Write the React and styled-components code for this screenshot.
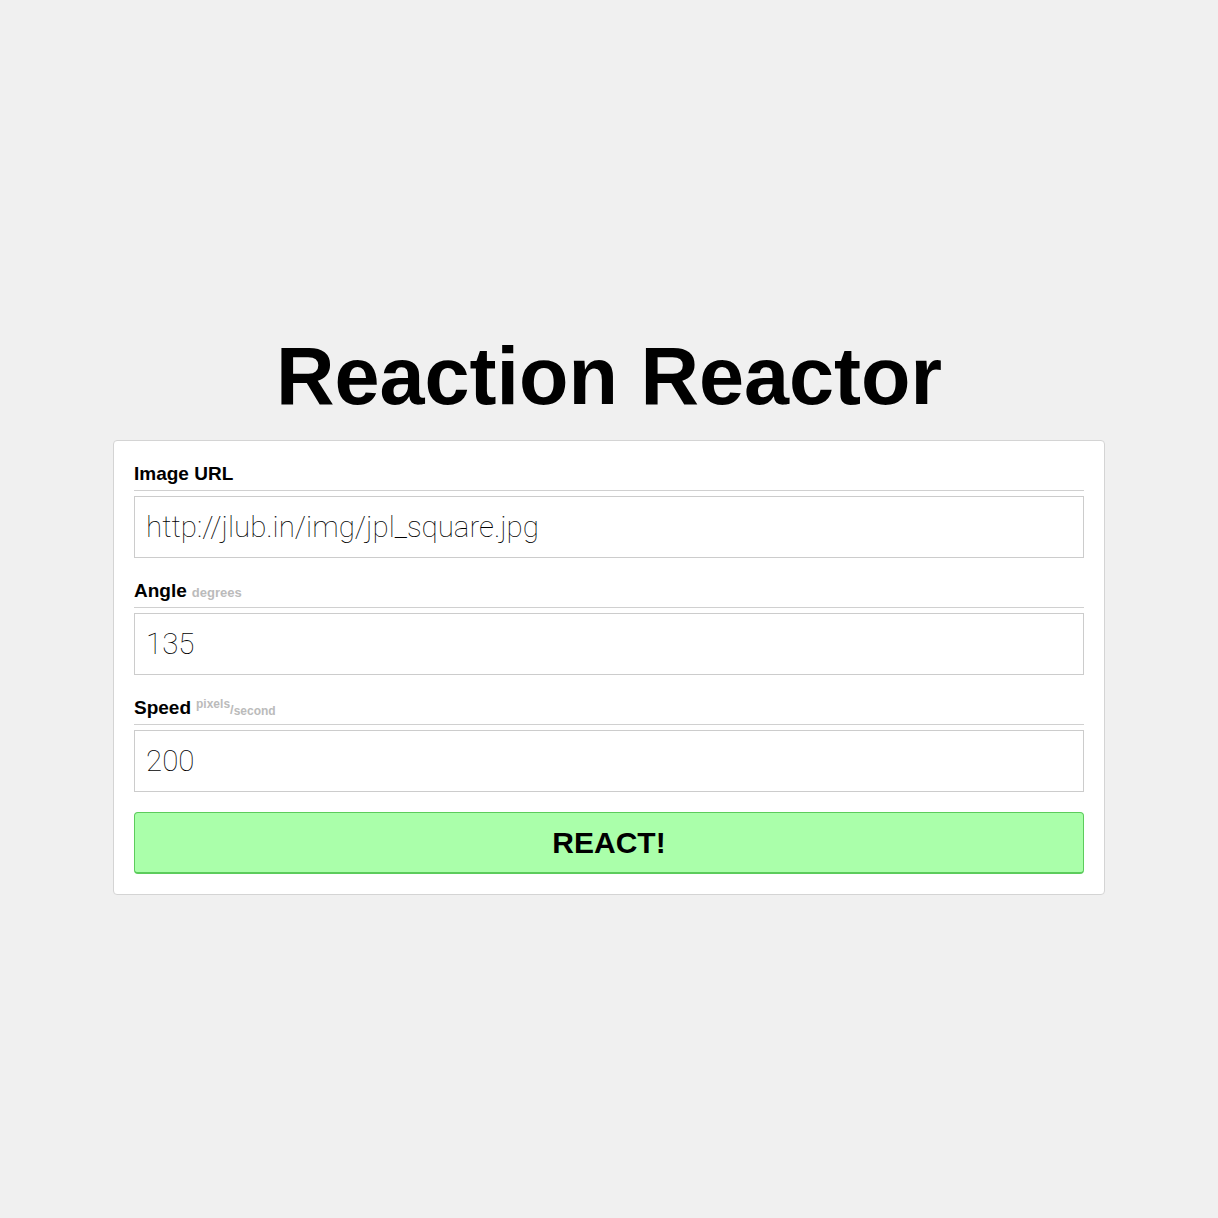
import React from 'react';
import styled, { createGlobalStyle } from 'styled-components';

const GlobalStyle = createGlobalStyle`
  html, body {
    margin: 0;
    padding: 0;
    background: #f0f0f0;
  }
  body {
    font-family: "Liberation Sans", Arial, sans-serif;
    color: #000;
  }
`;

const Page = styled.div`
  display: flex;
  flex-direction: column;
  align-items: center;
  padding-top: 330px;
`;

const Title = styled.h1`
  margin: 0 0 18px;
  font-size: 81px;
  line-height: 92px;
  font-weight: 700;
`;

const Card = styled.form`
  box-sizing: border-box;
  width: 992px;
  padding: 22px 20px 20px;
  background: #fff;
  border: 1px solid #d4d4d4;
  border-radius: 4px;
  display: flex;
  flex-direction: column;
`;

const Field = styled.div`
  display: flex;
  flex-direction: column;
  margin-bottom: 22px;

  &:last-of-type {
    margin-bottom: 20px;
  }
`;

const Label = styled.label`
  display: block;
  font-size: 19px;
  line-height: 22px;
  height: 22px;
  font-weight: 700;
  padding-bottom: 5px;
  border-bottom: 1px solid #d0d0d0;
  margin-bottom: 5px;
`;

const Unit = styled.span`
  margin-left: 5px;
  font-size: 13px;
  line-height: 1;
  font-weight: 700;
  color: #bbb;
`;

const Sup = styled.span`
  font-size: 12px;
  position: relative;
  top: -6px;
`;

const Sub = styled.span`
  font-size: 12px;
  position: relative;
  top: 1px;
`;

const Input = styled.input`
  box-sizing: border-box;
  width: 100%;
  height: 62px;
  padding: 0 11px;
  border: 1px solid #ccc;
  border-radius: 0;
  background: #fff;
  font-family: Roboto, "Liberation Sans", sans-serif;
  font-weight: 100;
  font-size: 29.5px;
  color: #000;
  outline: none;
`;

const Button = styled.button`
  box-sizing: border-box;
  width: 100%;
  height: 62px;
  background: #aaffaa;
  border: 1px solid #5ccc5c;
  border-bottom-width: 2px;
  border-radius: 4px;
  font-family: "Liberation Sans", Arial, sans-serif;
  font-size: 30px;
  font-weight: 700;
  color: #000;
  cursor: pointer;
`;

function App() {
  return (
    <Page>
      <GlobalStyle />
      <Title>Reaction Reactor</Title>
      <Card onSubmit={e => e.preventDefault()}>
        <Field>
          <Label>Image URL</Label>
          <Input defaultValue="http://jlub.in/img/jpl_square.jpg" />
        </Field>
        <Field>
          <Label>Angle<Unit>degrees</Unit></Label>
          <Input defaultValue="135" />
        </Field>
        <Field>
          <Label>
            Speed<Unit><Sup>pixels</Sup>/<Sub>second</Sub></Unit>
          </Label>
          <Input defaultValue="200" />
        </Field>
        <Button type="submit">REACT!</Button>
      </Card>
    </Page>
  );
}

export default App;
